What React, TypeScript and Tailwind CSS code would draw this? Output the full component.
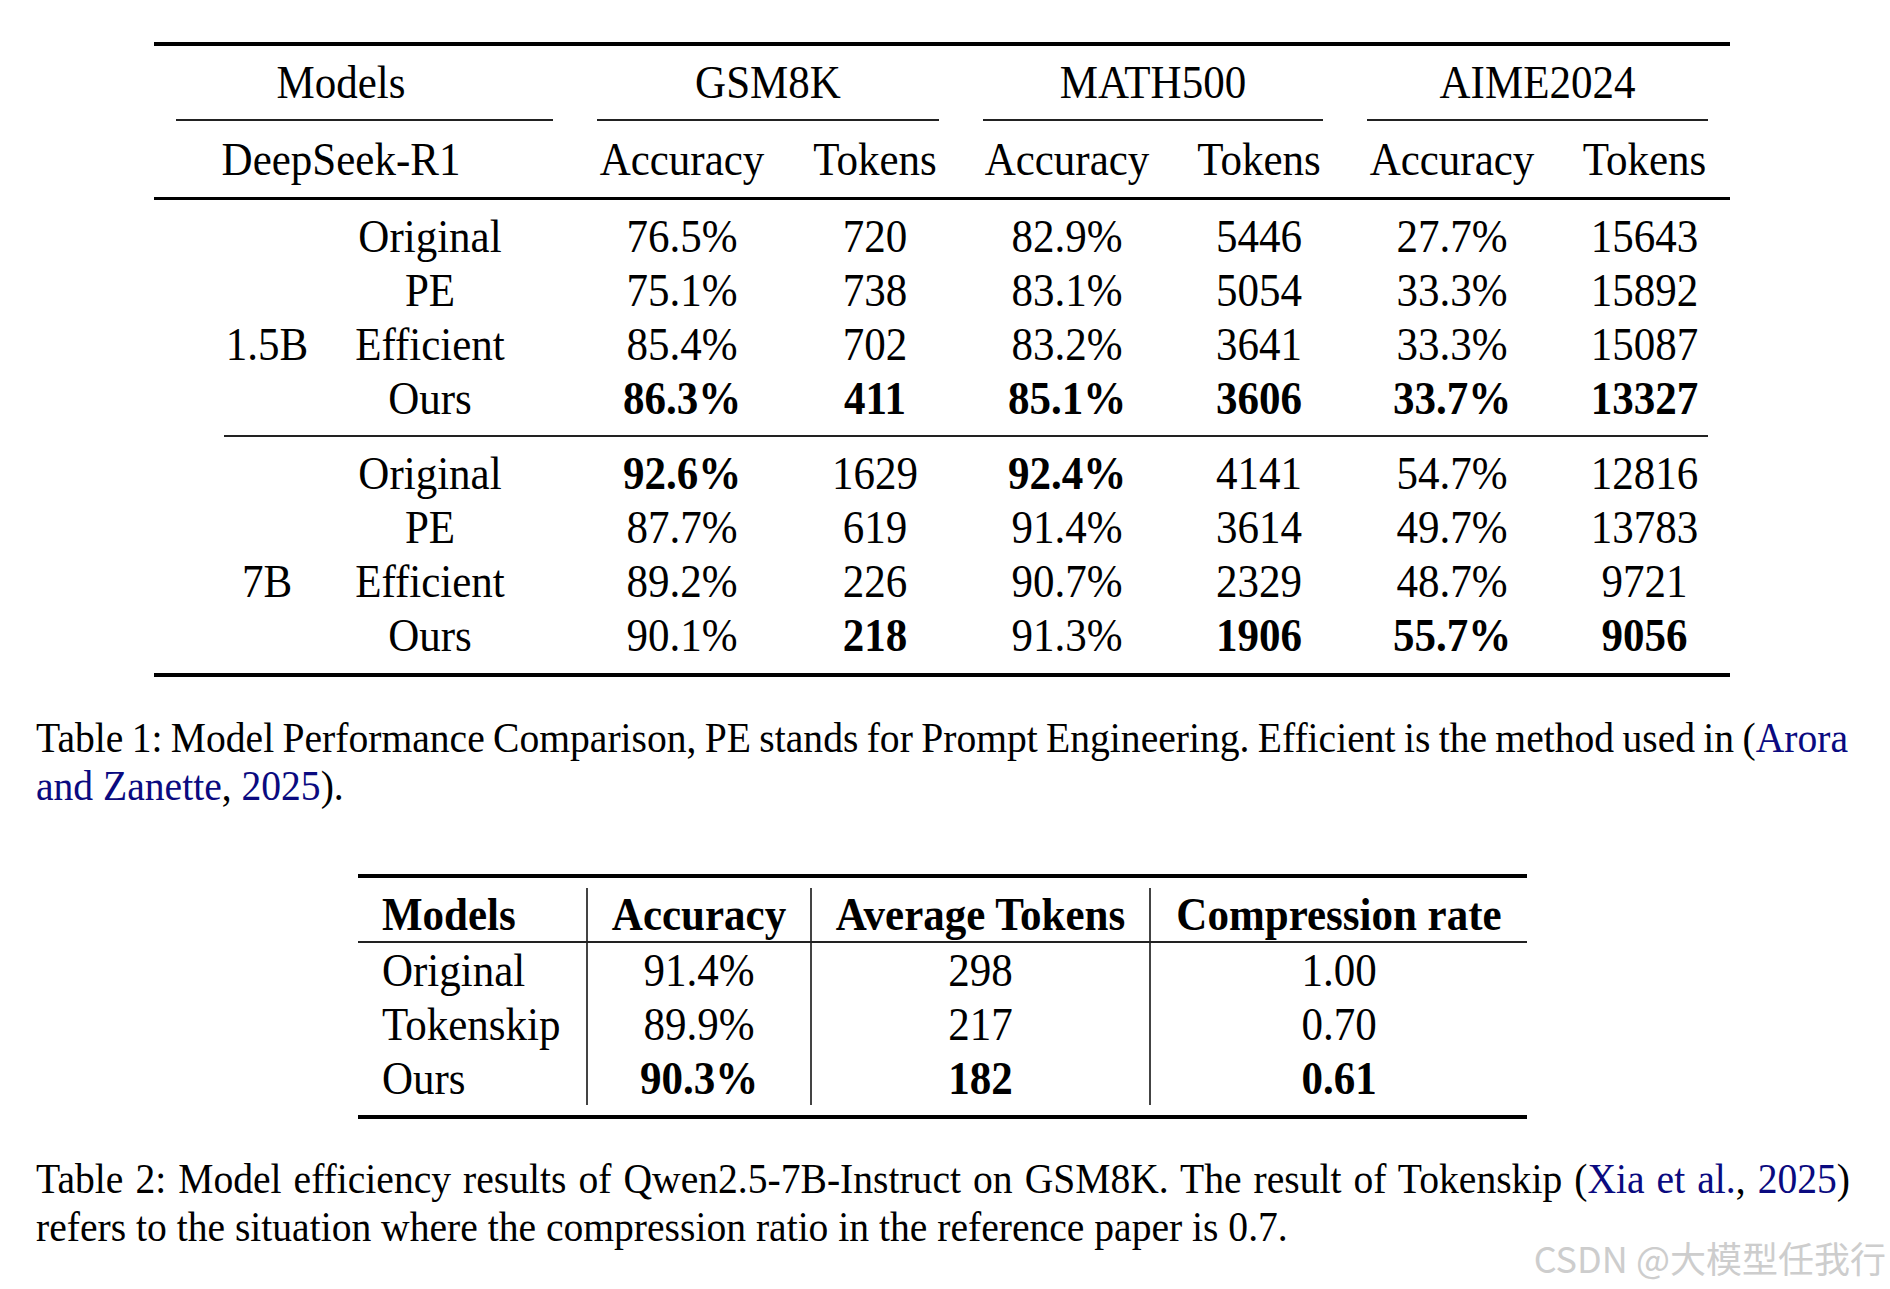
import React from "react";

type Row = { size: string; method: string; vals: string[]; bold: number[] };

const group1: Row[] = [
  { size: "", method: "Original", vals: ["76.5%", "720", "82.9%", "5446", "27.7%", "15643"], bold: [] },
  { size: "", method: "PE", vals: ["75.1%", "738", "83.1%", "5054", "33.3%", "15892"], bold: [] },
  { size: "1.5B", method: "Efficient", vals: ["85.4%", "702", "83.2%", "3641", "33.3%", "15087"], bold: [] },
  { size: "", method: "Ours", vals: ["86.3%", "411", "85.1%", "3606", "33.7%", "13327"], bold: [0, 1, 2, 3, 4, 5] },
];

const group2: Row[] = [
  { size: "", method: "Original", vals: ["92.6%", "1629", "92.4%", "4141", "54.7%", "12816"], bold: [0, 2] },
  { size: "", method: "PE", vals: ["87.7%", "619", "91.4%", "3614", "49.7%", "13783"], bold: [] },
  { size: "7B", method: "Efficient", vals: ["89.2%", "226", "90.7%", "2329", "48.7%", "9721"], bold: [] },
  { size: "", method: "Ours", vals: ["90.1%", "218", "91.3%", "1906", "55.7%", "9056"], bold: [1, 3, 4, 5] },
];

const t2 = [
  { m: "Original", v: ["91.4%", "298", "1.00"], b: false },
  { m: "Tokenskip", v: ["89.9%", "217", "0.70"], b: false },
  { m: "Ours", v: ["90.3%", "182", "0.61"], b: true },
];

function C({ children, className = "" }: { children?: React.ReactNode; className?: string }) {
  return (
    <div className={"flex h-full items-center justify-center whitespace-nowrap " + className}>
      <span className="inline-block scale-y-[1.1]">{children}</span>
    </div>
  );
}

function BodyRow({ r }: { r: Row }) {
  return (
    <div className="grid h-[54px] grid-cols-[195px_226px_214px_172px_212px_172px_214px_171px]">
      <C className="pl-[31px]">{r.size}</C>
      <C className="pr-[64px]">{r.method}</C>
      {r.vals.map((v, i) => (
        <C key={i} className={r.bold.includes(i) ? "font-bold" : ""}>
          {v}
        </C>
      ))}
    </div>
  );
}

export default function App() {
  return (
    <div className="relative h-[1289px] w-[1890px] overflow-hidden bg-white font-['Liberation_Serif',serif] text-black">
      {/* Table 1 */}
      <div className="ml-[154px] flex w-[1576px] flex-col pt-[42px] text-[43px] leading-none">
        <div className="h-[4px] bg-black" />
        <div className="mt-[9px] grid h-[54px] grid-cols-[421px_386px_384px_385px]">
          <C className="pr-[47px]">Models</C>
          <C>GSM8K</C>
          <C>MATH500</C>
          <C>AIME2024</C>
        </div>
        <div className="mt-[10px] grid h-[2px] grid-cols-[421px_386px_384px_385px]">
          <div className="mx-[22px] h-[2px] bg-[#222]" />
          <div className="mx-[22px] h-[2px] bg-[#222]" />
          <div className="mx-[22px] h-[2px] bg-[#222]" />
          <div className="mx-[22px] h-[2px] bg-[#222]" />
        </div>
        <div className="mt-[11px] grid h-[54px] grid-cols-[421px_214px_172px_212px_172px_214px_171px]">
          <C className="pr-[47px]">DeepSeek-R1</C>
          <C>Accuracy</C>
          <C>Tokens</C>
          <C>Accuracy</C>
          <C>Tokens</C>
          <C>Accuracy</C>
          <C>Tokens</C>
        </div>
        <div className="mt-[11px] h-[3px] bg-black" />
        <div className="mt-[9px] flex flex-col">
          {group1.map((r, i) => (
            <BodyRow key={i} r={r} />
          ))}
        </div>
        <div className="ml-[70px] mr-[22px] mt-[10px] h-[2px] bg-[#222]" />
        <div className="mt-[9px] flex flex-col">
          {group2.map((r, i) => (
            <BodyRow key={i} r={r} />
          ))}
        </div>
        <div className="mt-[11px] h-[4px] bg-black" />
      </div>

      {/* Caption 1 */}
      <div className="ml-[36px] mt-[37px] w-[1812px] text-[39.6px] leading-[48px]">
        <div className="scale-y-[1.08] whitespace-nowrap text-justify [text-align-last:justify] [word-spacing:-3px]">
          Table 1: Model Performance Comparison, PE stands for Prompt Engineering. Efficient is the method used in (
          <span className="text-[#0a0a80]">Arora</span>
        </div>
        <div className="scale-y-[1.08] whitespace-nowrap">
          <span className="text-[#0a0a80]">and Zanette</span>, <span className="text-[#0a0a80]">2025</span>).
        </div>
      </div>

      {/* Table 2 */}
      <div className="ml-[358px] mt-[64px] flex w-[1169px] flex-col text-[43px] leading-none">
        <div className="h-[4px] bg-black" />
        <div className="mt-[10px] grid h-[55px] grid-cols-[228px_224px_339px_378px] border-b-2 border-[#222] font-bold">
          <C className="justify-start pl-[24px]">Models</C>
          <C className="border-l-2 border-[#444]">Accuracy</C>
          <C className="border-l-2 border-[#444]">Average Tokens</C>
          <C className="border-l-2 border-[#444]">Compression rate</C>
        </div>
        {t2.map((r, i) => (
          <div key={i} className="grid h-[54px] grid-cols-[228px_224px_339px_378px]">
            <C className="justify-start pl-[24px]">{r.m}</C>
            <C className={"border-l-2 border-[#444] " + (r.b ? "font-bold" : "")}>{r.v[0]}</C>
            <C className={"border-l-2 border-[#444] " + (r.b ? "font-bold" : "")}>{r.v[1]}</C>
            <C className={"border-l-2 border-[#444] " + (r.b ? "font-bold" : "")}>{r.v[2]}</C>
          </div>
        ))}
        <div className="mt-[10px] h-[4px] bg-black" />
      </div>

      {/* Caption 2 */}
      <div className="ml-[36px] mt-[36px] w-[1814px] text-[39.6px] leading-[48px]">
        <div className="scale-y-[1.08] whitespace-nowrap text-justify [text-align-last:justify] [word-spacing:-3px]">
          Table 2: Model efficiency results of Qwen2.5-7B-Instruct on GSM8K. The result of Tokenskip (
          <span className="text-[#0a0a80]">Xia et al.</span>, <span className="text-[#0a0a80]">2025</span>)
        </div>
        <div className="scale-y-[1.08] whitespace-nowrap">
          refers to the situation where the compression ratio in the reference paper is 0.7.
        </div>
      </div>

      {/* Watermark */}
      <div className="absolute right-[4px] top-[1235px] whitespace-nowrap font-['Noto_Sans_CJK_SC',sans-serif] text-[36px] leading-[44px] text-[#cdcdcd]">
        CSDN @大模型任我行
      </div>
    </div>
  );
}
